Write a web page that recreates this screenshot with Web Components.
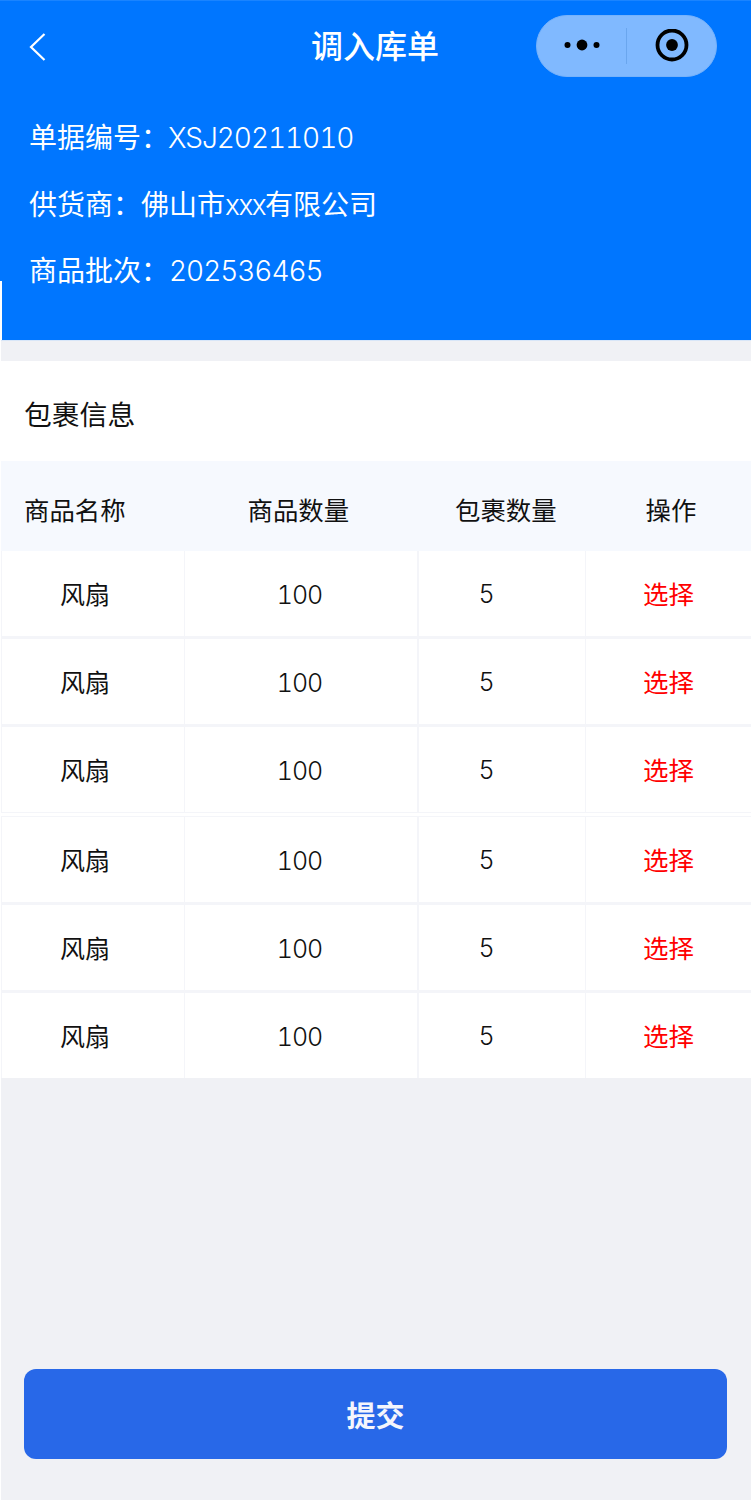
<!DOCTYPE html>
<html>
<head>
<meta charset="utf-8">
<style>
html, body { margin: 0; padding: 0; }
body {
   width: 751px;
   height: 1500px;
   overflow: hidden;
   background: #f0f1f5;
   font-family: Inter, "Noto Sans CJK SC", sans-serif;
   font-variant-numeric: tabular-nums;
}
</style>
</head>
<body>
<order-page>
   <order-header title="调入库单">
      <info-line>单据编号：<span style="letter-spacing: -1.05px; margin-left: -1px; font-weight: 300">XSJ20211010</span></info-line>
      <info-line style="margin-top: 39px">供货商：佛山市<span style="letter-spacing: -1.5px; font-weight: 300">xxx</span>有限公司</info-line>
      <info-line style="margin-top: 38px">商品批次：<span style="letter-spacing: -1.05px; font-weight: 300">202536465</span></info-line>
   </order-header>
   <parcel-table></parcel-table>
   <submit-button>提交</submit-button>
</order-page>

<script>
class OrderPage extends HTMLElement {
   constructor() {
      super();
      this.attachShadow({ mode: 'open' }).innerHTML = `
      <style>
      :host { display: flex; flex-direction: column; height: 1500px; position: relative; }
      .edge { position: absolute; left: 0; top: 281px; bottom: 0; width: 1px; background: #fff; }
      </style>
      <slot></slot>
      <div class="edge"></div>`;
   }
}

class OrderHeader extends HTMLElement {
   constructor() {
      super();
      this.attachShadow({ mode: 'open' }).innerHTML = `
      <style>
      :host { display: block; height: 341px; background: #0076ff; color: #fff; box-sizing: border-box; position: relative; border-top: 1px solid #1a84ff; border-bottom: 1px solid #d8e6f8; }
      .nav { display: grid; grid-template-columns: 1fr auto 1fr; align-items: center; height: 93px; box-sizing: border-box; padding: 0 34px; }
      .back { display: flex; margin: -2px 0 0 -6px; }
      .title { font-size: 32px; font-weight: 500; line-height: 91px; margin: -2px 0 0 -1px; white-space: nowrap; }
      .capsule {
         justify-self: end; margin-top: -3px;
         width: 181px; height: 62px; box-sizing: border-box; border-radius: 31px;
         background: #80b9ff; border: 1px solid #76b2fb; display: flex; align-items: center;
      }
      .more { width: 89px; display: flex; justify-content: center; box-sizing: border-box; }
      .sep { width: 1px; height: 36px; background: #6aa6ee; }
      .target { flex: 1; display: flex; justify-content: center; }
      .info { padding: 30px 0 0 29px; }
      .strip { position: absolute; left: 0; top: 280px; width: 2px; height: 59px; background: #fff; }
      </style>
      <div class="nav">
         <span class="back"><svg width="18" height="28" viewBox="0 0 18 28"><path d="M16.5 1 L3 14 L16.5 27" fill="none" stroke="#fff" stroke-width="2.2"/></svg></span>
         <span class="title"></span>
         <span class="capsule">
            <span class="more"><svg width="38" height="14" viewBox="0 0 38 14"><circle cx="4.5" cy="6" r="3" fill="#000"/><circle cx="19" cy="6" r="5.4" fill="#000"/><circle cx="33.5" cy="6" r="3" fill="#000"/></svg></span>
            <span class="sep"></span>
            <span class="target"><svg width="34" height="34" viewBox="0 0 34 34"><circle cx="17" cy="16" r="14.5" fill="none" stroke="#000" stroke-width="3.8"/><circle cx="17" cy="16" r="5.9" fill="#000"/></svg></span>
         </span>
      </div>
      <div class="info"><slot></slot></div>
      <div class="strip"></div>`;
      this.shadowRoot.querySelector('.title').textContent = this.getAttribute('title');
   }
}

class InfoLine extends HTMLElement {
   constructor() {
      super();
      this.attachShadow({ mode: 'open' }).innerHTML = `
      <style>
      :host { display: block; font-size: 28px; line-height: 28px; white-space: nowrap; }
      </style>
      <slot></slot>`;
   }
}

class ParcelRow extends HTMLElement {
   constructor() {
      super();
      this.attachShadow({ mode: 'open' }).innerHTML = `
      <style>
      :host {
         display: grid; grid-template-columns: 182px 1px 232px 2px 166px 1px 165px;
         height: 85px; margin-bottom: 3px; font-size: 25px; color: #111;
      }
      div { background: #fff; display: flex; align-items: center; justify-content: center; box-sizing: border-box; }
      i { display: block; }
      .name { padding: 0 16px 2px 0; }
      .qty { padding: 2px 3px 0 0; letter-spacing: -1px; font-weight: 300; }
      .num { padding-right: 31px; font-weight: 300; }
      .op { color: #f00; padding: 0 0 2px 0; font-size: 25.5px; }
      </style>
      <div class="name"></div><i></i><div class="qty"></div><i></i><div class="num"></div><i></i><div class="op">选择</div>`;
      const cells = this.shadowRoot.querySelectorAll('div');
      cells[0].textContent = this.getAttribute('name');
      cells[1].textContent = this.getAttribute('qty');
      cells[2].textContent = this.getAttribute('parcels');
   }
}

class ParcelTable extends HTMLElement {
   constructor() {
      super();
      let rows = '';
      for(let i = 0; i < 6; i++) {
         let extra = i == 2 ? ' style="margin-bottom: 1px"' : (i == 5 ? ' style="margin-bottom: 0"' : '');
         rows += `<parcel-row name="风扇" qty="100" parcels="5"${extra}></parcel-row>`;
         if(i == 2) rows += '<div class="gap"></div>';
      }
      this.attachShadow({ mode: 'open' }).innerHTML = `
      <style>
      :host { display: block; margin-top: 20px; }
      .caption { height: 100px; background: #fff; font-size: 27.8px; line-height: 109px; padding-left: 24px; color: #111; }
      .head {
         height: 90px; box-sizing: border-box; padding-top: 6px; background: #f6f9fe; font-size: 25.4px; color: #111;
         display: flex; align-items: center;
      }
      .head span { white-space: nowrap; }
      .head span:nth-child(1) { margin-left: 24px; width: 223.5px; }
      .head span:nth-child(2) { width: 207.5px; }
      .head span:nth-child(3) { width: 190.5px; }
      .rows { background: #f4f5f9; padding-left: 2px; }
      .gap { height: 3px; margin: 0 0 1px -2px; background: #fff; }
      </style>
      <div class="caption">包裹信息</div>
      <div class="head"><span>商品名称</span><span>商品数量</span><span>包裹数量</span><span>操作</span></div>
      <div class="rows">${rows}</div>`;
   }
}

class SubmitButton extends HTMLElement {
   constructor() {
      super();
      this.attachShadow({ mode: 'open' }).innerHTML = `
      <style>
      :host {
         display: flex; align-items: center; justify-content: center;
         height: 90px; margin: auto 24px 41px; background: #2868e8; border-radius: 12px;
         color: #f4f6fc; font-size: 29px; font-weight: 600;
      }
      </style>
      <slot></slot>`;
   }
}

customElements.define('order-page', OrderPage);
customElements.define('order-header', OrderHeader);
customElements.define('info-line', InfoLine);
customElements.define('parcel-row', ParcelRow);
customElements.define('parcel-table', ParcelTable);
customElements.define('submit-button', SubmitButton);
</script>
</body>
</html>
